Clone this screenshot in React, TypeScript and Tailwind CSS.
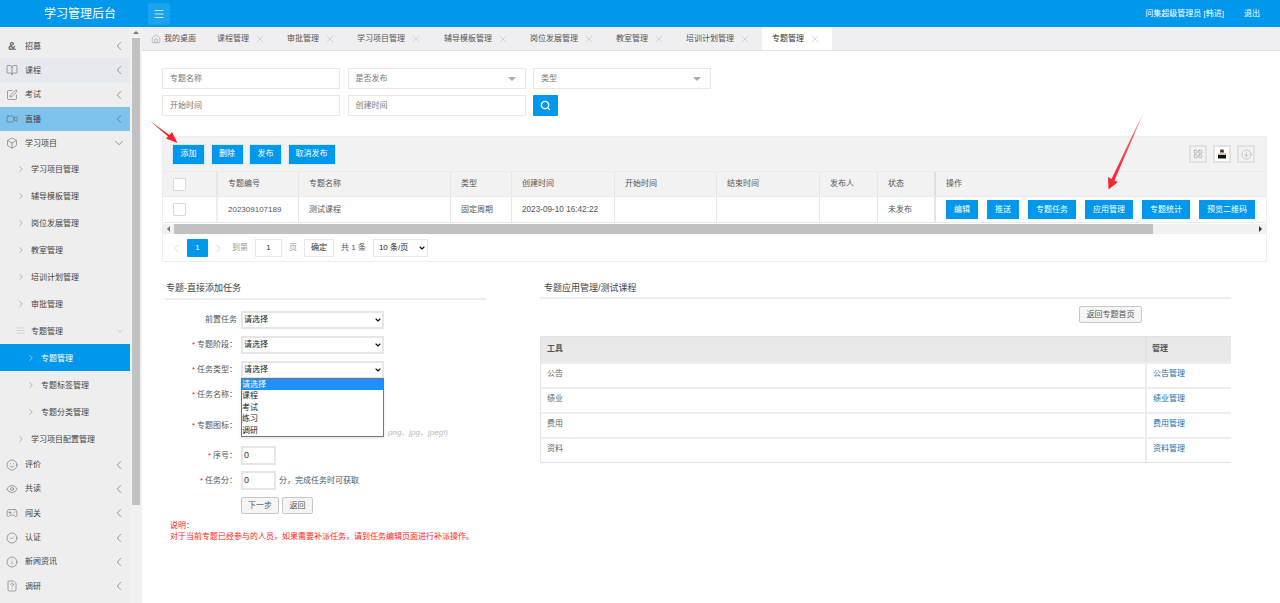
import React from "react";
import {
  BookOpen, SquarePen, Video, Box, ChevronLeft, ChevronRight, ChevronDown, Home, X, Search,
  Eye, Gamepad2, CircleCheck, Info, FileQuestion, Menu, Smile, LayoutGrid, CircleArrowDown, AlignJustify,
} from "lucide-react";

const font = "font-['Liberation_Sans','Noto_Sans_CJK_SC',sans-serif]";

function Top({ icon, label, open, cls = "" }: { icon: React.ReactNode; label: string; open?: boolean; cls?: string }) {
  return (
    <div className={`h-[24.3px] flex items-center pl-[6px] pr-[4px] text-[8px] text-[#444] ${cls}`}>
      <span className="w-[12px] h-[12px] flex items-center justify-center text-[#666] shrink-0">{icon}</span>
      <span className="ml-[7px] flex-1 pt-[1px]">{label}</span>
      {open ? <ChevronDown size={14} strokeWidth={1} className="text-[#555]" /> : <ChevronLeft size={14} strokeWidth={1} className="text-[#555]" />}
    </div>
  );
}

function Sub({ label, deep, active }: { label: string; deep?: boolean; active?: boolean }) {
  return (
    <div className={`h-[27px] flex items-center text-[8px] ${deep ? "pl-[26px]" : "pl-[16px]"} ${active ? "bg-[#0098ed] text-white" : "text-[#444]"}`}>
      <ChevronRight size={10} strokeWidth={1.2} className={active ? "text-white" : "text-[#777]"} />
      <span className="ml-[5px] pt-[2px]">{label}</span>
    </div>
  );
}

function Sidebar() {
  const ic = { size: 12, strokeWidth: 1.2 };
  return (
    <aside className="w-[142px] shrink-0 flex bg-[#eeeeee] overflow-hidden">
      <div className="w-[130px] pt-[7px] shrink-0">
        <Top icon={<span className="text-[11px] font-bold leading-none">&amp;</span>} label="招募" />
        <Top icon={<BookOpen {...ic} />} label="课程" cls="bg-[#e6eaee]" />
        <Top icon={<SquarePen {...ic} />} label="考试" />
        <Top icon={<Video {...ic} />} label="直播" cls="bg-[#7ec3ee]" />
        <Top icon={<Box {...ic} />} label="学习项目" open />
        <Sub label="学习项目管理" />
        <Sub label="辅导模板管理" />
        <Sub label="岗位发展管理" />
        <Sub label="教室管理" />
        <Sub label="培训计划管理" />
        <Sub label="审批管理" />
        <div className="h-[27px] flex items-center pl-[16px] pr-[5px] text-[8px] text-[#444]">
          <AlignJustify size={9} strokeWidth={1} className="text-[#aaa]" />
          <span className="ml-[6px] flex-1 pt-[2px]">专题管理</span>
          <ChevronDown size={10} strokeWidth={1} className="text-[#888]" />
        </div>
        <Sub label="专题管理" deep active />
        <Sub label="专题标签管理" deep />
        <Sub label="专题分类管理" deep />
        <Sub label="学习项目配置管理" />
        <Top icon={<Smile {...ic} />} label="评价" />
        <Top icon={<Eye {...ic} />} label="共读" />
        <Top icon={<Gamepad2 {...ic} />} label="闯关" />
        <Top icon={<CircleCheck {...ic} />} label="认证" />
        <Top icon={<Info {...ic} />} label="新闻资讯" />
        <Top icon={<FileQuestion {...ic} />} label="调研" />
      </div>
      <div className="flex-1 bg-[#f1f1f1] pl-[2px] pr-[2px] flex flex-col">
        <div className="h-[11px] flex items-center justify-center">
          <span className="w-0 h-0 border-x-[3px] border-x-transparent border-b-[3px] border-b-[#777]" />
        </div>
        <div className="h-[467px] bg-[#c1c1c1]" />
      </div>
    </aside>
  );
}

function Tab({ label, w, active }: { label: string; w: string; active?: boolean }) {
  return (
    <div className={`h-full flex items-center pl-[10px] shrink-0 ${w} ${active ? "bg-white text-[#333]" : "text-[#555]"}`}>
      <span className="whitespace-nowrap">{label}</span>
      <X size={12} strokeWidth={1.1} className="ml-[5px] text-[#bbb]" />
    </div>
  );
}

function Field({ label, arrow }: { label: string; arrow?: boolean }) {
  return (
    <div className="h-[21px] w-[178px] bg-white border border-[#e8e8e8] flex items-center justify-between pl-[7px] pr-[9px] text-[8px] text-[#777]">
      <span>{label}</span>
      {arrow && <span className="w-0 h-0 border-x-[4px] border-x-transparent border-t-[4px] border-t-[#aaa]" />}
    </div>
  );
}

function Btn({ label, w }: { label: string; w: string }) {
  return <div className={`h-[21px] ${w} bg-[#0098ed] border border-[#cfeafa] rounded-[1px] text-white text-[8px] flex items-center justify-center`}>{label}</div>;
}

function Th({ w, children }: { w: string; children?: React.ReactNode }) {
  return <div className={`${w} shrink-0 h-full flex items-center pl-[10px] border-r border-[#e6e6e6] text-[8px] text-[#555]`}>{children}</div>;
}

function Check() {
  return <span className="ml-[10px] w-[13px] h-[13px] bg-white border border-[#d8d8d8] rounded-[1px] block" />;
}

function Sel({ cls = "w-[143px] h-[18px] border-2 border-[#e6e6e6] pl-[1px]", label = "请选择" }: { cls?: string; label?: string }) {
  return (
    <span className="relative inline-flex">
      <select className={`appearance-none text-[8px] text-[#222] bg-white ${cls}`}>
        <option>{label}</option>
      </select>
      <ChevronDown size={8} strokeWidth={3.5} className="absolute right-[2px] top-[5px] text-[#111] pointer-events-none" />
    </span>
  );
}

function Row({ label, star, y, children }: { label: string; star?: boolean; y: string; children?: React.ReactNode }) {
  return (
    <div className={`flex items-center ${y}`}>
      <div className="w-[72px] shrink-0 text-right text-[8px] text-[#555] whitespace-nowrap">
        {star && <span className="text-[#ff2020] mr-[2px]">*</span>}
        {label}
      </div>
      <div className="ml-[4px] flex items-center">{children}</div>
    </div>
  );
}

function NumBox() {
  return <div className="w-[35px] h-[19px] border-2 border-[#e6e6e6] bg-white flex items-center pl-[1px] text-[9px] text-[#333]">0</div>;
}

function App() {
  return (
    <div className={`w-[1280px] h-[603px] relative overflow-hidden bg-white flex flex-col ${font}`}>
      <header className="h-[27px] shrink-0 bg-[#0098ed] flex items-center text-white">
        <div className="w-[148px] shrink-0 pl-[44px] text-[12px]">学习管理后台</div>
        <div className="w-[22px] h-[22px] bg-[#1aa3ef] rounded-[2px] flex items-center justify-center">
          <Menu size={12} strokeWidth={1.5} />
        </div>
        <div className="ml-auto text-[8px] flex">
          <span>问集超级管理员 [韩进]</span>
          <span className="ml-[20px] mr-[20px]">退出</span>
        </div>
      </header>
      <div className="flex flex-1 min-h-0">
        <Sidebar />
        <main className="flex-1 min-w-0 flex flex-col">
          <div className="h-[24px] shrink-0 bg-[#efeff1] border-b border-[#e2e2e2] flex items-center text-[8px]">
            <div className="w-[65px] h-full flex items-center pl-[9px] text-[#555] shrink-0">
              <Home size={10} strokeWidth={1} className="text-[#777]" />
              <span className="ml-[3px]">我的桌面</span>
            </div>
            <Tab label="课程管理" w="w-[70px]" />
            <Tab label="审批管理" w="w-[70px]" />
            <Tab label="学习项目管理" w="w-[87px]" />
            <Tab label="辅导模板管理" w="w-[86px]" />
            <Tab label="岗位发展管理" w="w-[86px]" />
            <Tab label="教室管理" w="w-[70px]" />
            <Tab label="培训计划管理" w="w-[86px]" />
            <Tab label="专题管理" w="w-[70px]" active />
          </div>

          <div className="pl-[20px] pr-[13px] pt-[17px]">
            <div className="flex gap-[7.5px]">
              <Field label="专题名称" />
              <Field label="是否发布" arrow />
              <Field label="类型" arrow />
            </div>
            <div className="flex gap-[7.5px] mt-[6px]">
              <Field label="开始时间" />
              <Field label="创建时间" />
              <div className="w-[25px] h-[21px] bg-[#0098ed] rounded-[1px] flex items-center justify-center text-white">
                <Search size={11} strokeWidth={3} />
              </div>
            </div>

            <div className="mt-[20px] h-[126px] border border-[#eeeeee] overflow-hidden">
              <div className="h-[34px] bg-[#f2f2f2] flex items-center pl-[9px] pr-[11px] gap-[5.5px]">
                <Btn label="添加" w="w-[33px]" />
                <Btn label="删除" w="w-[33px]" />
                <Btn label="发布" w="w-[33px]" />
                <Btn label="取消发布" w="w-[48px]" />
                <div className="ml-auto flex gap-[6px]">
                  <div className="w-[18px] h-[18px] border-2 border-[#e2e2e2] flex items-center justify-center text-[#888]"><LayoutGrid size={10} strokeWidth={1.2} /></div>
                  <div className="w-[18px] h-[18px] border-2 border-[#e2e2e2] bg-white flex items-center justify-center">
                    <svg width="10" height="10" viewBox="0 0 10 10">
                      <path d="M3.5 0.5h3l0.5 3h-4z" fill="#333" />
                      <rect x="1" y="4.5" width="8" height="1.2" fill="#d99a55" />
                      <rect x="1" y="6" width="8" height="3.5" fill="#111" />
                    </svg>
                  </div>
                  <div className="w-[18px] h-[18px] border-2 border-[#e2e2e2] flex items-center justify-center text-[#999]"><CircleArrowDown size={11} strokeWidth={1} /></div>
                </div>
              </div>
              <div className="h-[26px] bg-[#f2f2f2] flex border-y border-[#ebebeb]">
                <div className="w-[55px] shrink-0 h-full flex items-center border-r-2 border-[#e6e6e6]"><Check /></div>
                <Th w="w-[81px]">专题编号</Th>
                <Th w="w-[152px]">专题名称</Th>
                <Th w="w-[61px]">类型</Th>
                <Th w="w-[103px]">创建时间</Th>
                <Th w="w-[102px]">开始时间</Th>
                <Th w="w-[103px]">结束时间</Th>
                <Th w="w-[58px]">发布人</Th>
                <div className="w-[58px] shrink-0 h-full flex items-center pl-[10px] border-r-2 border-[#e0e0e0] text-[8px] text-[#555]">状态</div>
                <div className="flex-1 flex items-center pl-[10px] text-[8px] text-[#555]">操作</div>
              </div>
              <div className="h-[26px] flex border-b border-[#ebebeb]">
                <div className="w-[55px] shrink-0 h-full flex items-center border-r-2 border-[#eeeeee]"><Check /></div>
                <Th w="w-[81px]">202309107189</Th>
                <Th w="w-[152px]">测试课程</Th>
                <Th w="w-[61px]">固定周期</Th>
                <Th w="w-[103px]"><span className="block pt-[1px] text-[8.2px]">2023-09-10 16:42:22</span></Th>
                <Th w="w-[102px]" />
                <Th w="w-[103px]" />
                <Th w="w-[58px]" />
                <div className="w-[58px] shrink-0 h-full flex items-center pl-[10px] border-r-2 border-[#e6e6e6] text-[8px] text-[#555]">未发布</div>
                <div className="flex-1 flex items-center pl-[10px] gap-[9px] text-white text-[8px]">
                  {[["编辑", "w-[32px]"], ["推送", "w-[32px]"], ["专题任务", "w-[48px]"], ["应用管理", "w-[48px]"], ["专题统计", "w-[48px]"], ["预览二维码", "w-[56px]"]].map(([t, w]) => (
                    <div key={t} className={`h-[19px] ${w} bg-[#0098ed] flex items-center justify-center`}>{t}</div>
                  ))}
                </div>
              </div>
              <div className="h-[10px] mt-[1px] bg-[#f1f1f1] flex items-center">
                <div className="w-[11px] flex justify-center"><span className="w-0 h-0 border-y-[3px] border-y-transparent border-r-[3px] border-r-[#777]" /></div>
                <div className="w-[979px] h-full bg-[#c1c1c1]" />
                <div className="ml-auto w-[12px] flex justify-center"><span className="w-0 h-0 border-y-[3px] border-y-transparent border-l-[3px] border-l-[#333]" /></div>
              </div>
              <div className="h-[18px] mt-[5px] flex items-center text-[8px] text-[#555] pl-[7px]">
                <ChevronLeft size={13} strokeWidth={1} className="text-[#bbb]" />
                <div className="ml-[4px] w-[21px] h-[18px] bg-[#0098ed] text-white flex items-center justify-center rounded-[1px]">1</div>
                <ChevronRight size={13} strokeWidth={1} className="ml-[4px] text-[#bbb]" />
                <span className="ml-[7px] text-[#999]">到第</span>
                <div className="ml-[7px] w-[27px] h-[18px] border border-[#e8e8e8] flex items-center justify-center text-[#333]">1</div>
                <span className="ml-[7px] text-[#999]">页</span>
                <div className="ml-[7px] w-[30px] h-[18px] border border-[#e8e8e8] flex items-center justify-center text-[#333]">确定</div>
                <span className="ml-[7px]">共 1 条</span>
                <span className="ml-[7px] inline-flex">
                  <Sel cls="w-[55px] h-[18px] border border-[#e8e8e8] pl-[5px]" label="10 条/页" />
                </span>
              </div>
            </div>
          </div>

          <div className="flex pl-[23px] pt-[18px]">
            <section className="w-[321px] shrink-0">
              <div className="h-[20px] border-b-2 border-[#eeeeee] pl-[1px] text-[9px] text-[#444] leading-[16px]">专题-直接添加任务</div>
              <Row label="前置任务" y="mt-[11px]"><Sel /></Row>
              <Row label="专题阶段：" star y="mt-[7px]"><Sel /></Row>
              <Row label="任务类型：" star y="mt-[7px]"><Sel /></Row>
              <Row label="任务名称：" star y="mt-[10px]" />
              <Row label="专题图标：" star y="mt-[19px] h-[12px]">
                <span className="ml-[147px] mt-[14px] text-[8px] italic text-[#bbb] whitespace-nowrap">png、jpg、jpeg!)</span>
              </Row>
              <Row label="序号：" star y="mt-[14px]"><NumBox /></Row>
              <Row label="任务分：" star y="mt-[6px]">
                <NumBox />
                <span className="ml-[3px] text-[8px] text-[#555] whitespace-nowrap">分，完成任务时可获取</span>
              </Row>
              <div className="mt-[7px] ml-[76px] flex gap-[3px] text-[8px] text-[#555]">
                <div className="w-[38px] h-[17px] bg-[#f5f5f5] border border-[#c8c8c8] rounded-[2px] flex items-center justify-center">下一步</div>
                <div className="w-[31px] h-[17px] bg-[#f5f5f5] border border-[#c8c8c8] rounded-[2px] flex items-center justify-center">返回</div>
              </div>
              <div className="mt-[6px] ml-[5px] text-[8px] leading-[11px] text-[#ff2020] whitespace-nowrap">
                <div>说明：</div>
                <div>对于当前专题已经参与的人员，如果需要补派任务，请到任务编辑页面进行补派操作。</div>
              </div>
            </section>

            <section className="ml-[54px] w-[691px] shrink-0">
              <div className="h-[19px] border-b-2 border-[#eeeeee] pl-[4px] text-[9px] text-[#444] leading-[16px]">专题应用管理/测试课程</div>
              <div className="flex justify-end mt-[7px] pr-[89px]">
                <div className="w-[63px] h-[17px] bg-[#f5f5f5] border border-[#c8c8c8] rounded-[2px] flex items-center justify-center text-[8px] text-[#555]">返回专题首页</div>
              </div>
              <div className="mt-[13px] border-y border-l border-[#e2e2e2] rounded-l-[2px] text-[8px] text-[#666]">
                <div className="h-[25px] bg-[#e9e9e9] flex items-center font-bold text-[#555]">
                  <div className="w-[606px] pl-[6px] pb-[1px] h-full flex items-center border-r-2 border-[#e2e2e2]">工具</div>
                  <div className="pl-[5px] pb-[1px]">管理</div>
                </div>
                {["公告", "绩业", "费用", "资料"].map((t) => (
                  <div key={t} className="h-[25px] flex items-center border-t-2 border-[#eeeeee]">
                    <div className="w-[606px] pl-[6px] pb-[3px] h-full flex items-center border-r-2 border-[#eeeeee]">{t}</div>
                    <div className="pl-[6px] pb-[3px] text-[#1d6fa5]">{t}管理</div>
                  </div>
                ))}
              </div>
            </section>
          </div>
        </main>
      </div>

      <div className="absolute left-[241px] top-[378px] w-[143px] h-[59px] bg-white border border-[#777] text-[8px] text-[#222] leading-[11.4px] shadow-sm">
        <div className="bg-[#1e90ff] text-white">请选择</div>
        <div>课程</div>
        <div>考试</div>
        <div>练习</div>
        <div>调研</div>
      </div>

      <svg className="absolute left-0 top-0 pointer-events-none" width="1280" height="603">
        <defs>
          <linearGradient id="fadeA" x1="1146" y1="107" x2="1110" y2="189" gradientUnits="userSpaceOnUse">
            <stop offset="0" stopColor="#ffffff" />
            <stop offset="0.35" stopColor="#f5525a" />
            <stop offset="1" stopColor="#f5222d" />
          </linearGradient>
        </defs>
        <polygon points="150,121 169.5,135 172,132 177.5,143 166,138.5 168,136.5" fill="#f5222d" />
        <polygon points="1146,107 1114.5,180.5 1118,182 1108.5,189.5 1108,177 1111.5,179" fill="url(#fadeA)" />
      </svg>
    </div>
  );
}

export default App;
